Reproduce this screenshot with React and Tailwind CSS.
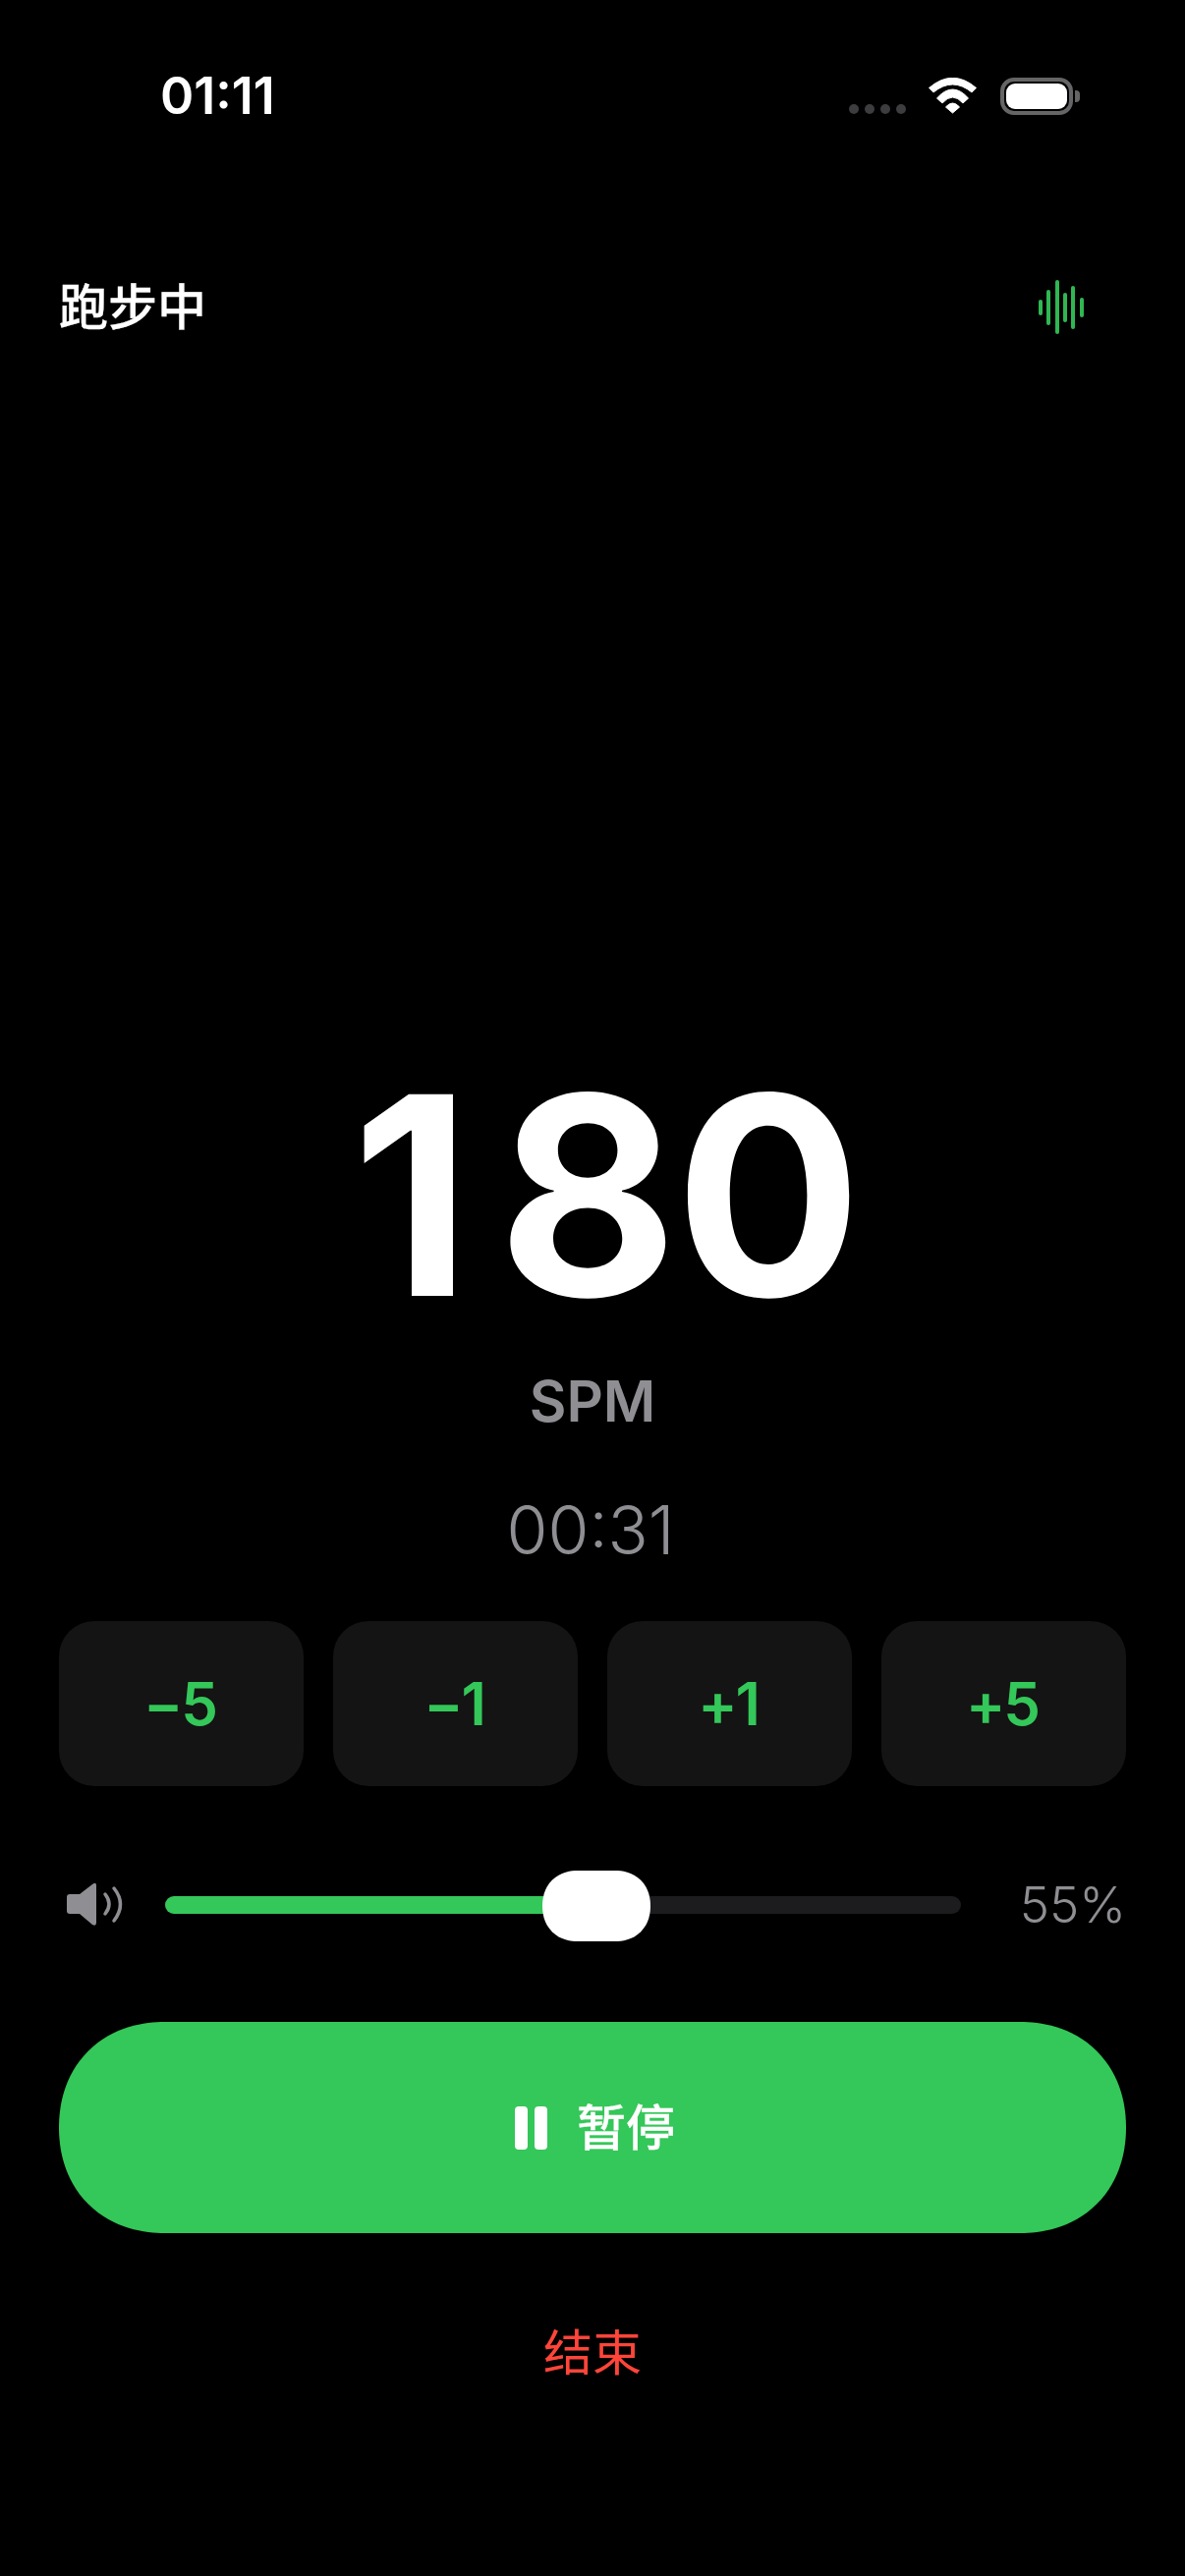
const steps = ["−5", "−1", "+1", "+5"];

function StatusIcons() {
  return (
    <div className="flex items-center">
      <div className="flex gap-[6px] mt-[26px]">
        <span className="w-[10px] h-[10px] rounded-full bg-[#3d3d3f]" />
        <span className="w-[10px] h-[10px] rounded-full bg-[#3d3d3f]" />
        <span className="w-[10px] h-[10px] rounded-full bg-[#3d3d3f]" />
        <span className="w-[10px] h-[10px] rounded-full bg-[#3d3d3f]" />
      </div>
      <svg className="ml-[22px]" width="52" height="38" viewBox="0 0 52 38">
        <g fill="#fff" stroke="#fff" strokeWidth="1" strokeLinejoin="round">
          <path d="M1.5 10.5 Q25.5 -10 49.5 10.5 L45 15 Q25.5 -1 6 15 Z" />
          <path d="M9.5 21 Q25.5 3 41.5 21 L36 26 Q25.5 14 15 26 Z" />
          <path d="M18.5 30 Q25.5 22 32.5 30 L25.5 36 Z" />
        </g>
      </svg>
      <div className="ml-[22px] w-[74px] h-[38px] rounded-[14px] border-[4px] border-[#656567] p-[2px]">
        <div className="w-full h-full rounded-[9px] bg-white" />
      </div>
      <div className="ml-[2px] w-[5px] h-[12px] rounded-r-[4px] bg-[#656567]" />
    </div>
  );
}

function Waveform() {
  const bars = [
    [3, 37, 49],
    [11, 27, 59],
    [20, 17, 68],
    [28, 30, 56],
    [36, 23, 63],
    [45, 35, 51],
  ];
  return (
    <svg width="48" height="86" viewBox="0 0 48 86" className="text-[#34c759]">
      {bars.map(([x, y1, y2]) => (
        <line key={x} x1={x} x2={x} y1={y1} y2={y2} stroke="currentColor" strokeWidth="4" strokeLinecap="round" opacity="0.92" />
      ))}
    </svg>
  );
}

function SpeakerIcon() {
  return (
    <svg width="66" height="48" viewBox="0 0 66 48" className="text-[#8e8e93] overflow-visible">
      <path d="M38 4 Q38 0 34 3 L21 13 H11 Q8 13 8 16 V30 Q8 33 11 33 H21 L34 44 Q38 46 38 42 Z" fill="currentColor" />
      <path d="M47 13 Q55 23 47 33" fill="none" stroke="currentColor" strokeWidth="3.5" strokeLinecap="round" />
      <path d="M56 7 Q69 23 56 40" fill="none" stroke="currentColor" strokeWidth="3.5" strokeLinecap="round" />
    </svg>
  );
}

export default function App() {
  return (
    <div className="w-[1206px] h-[2622px] bg-black flex flex-col font-['Inter','Noto_Sans_CJK_SC',sans-serif] overflow-hidden">
      {/* status bar */}
      <div className="mt-[68px] h-[60px] flex items-center justify-between pl-[163px] pr-[107px]">
        <span className="text-[52px] leading-[60px] font-semibold text-white">01:11</span>
        <StatusIcons />
      </div>

      {/* header */}
      <div className="mt-[155px] h-[60px] px-[60px] flex items-center justify-between">
        <span className="text-[50px] leading-[60px] font-medium text-white [-webkit-text-stroke:0.3px_white]">跑步中</span>
        <div className="mr-[42px]">
          <Waveform />
        </div>
      </div>

      <div className="flex-1" />

      {/* cadence readout */}
      <div className="flex flex-col items-center">
        <div className="h-[288px] pl-[26px] text-[282px] leading-[288px] font-bold text-white tracking-[-3px]">
          <span className="mr-[30px]">1</span>80
        </div>
        <div className="mt-[29px] h-[72px] text-[58px] leading-[72px] font-semibold text-[#8e8e93]">SPM</div>
        <div className="mt-[55px] mr-[4px] h-[80px] text-[68px] leading-[80px] font-[350] text-[#8e8e93]">00:31</div>
      </div>

      {/* cadence steppers */}
      <div className="mt-[53px] px-[60px] grid grid-cols-4 gap-[30px]">
        {steps.map((s) => (
          <button key={s} className="h-[168px] pr-[3px] rounded-[36px] bg-[#141414] text-[60px] font-semibold tracking-[-2px] text-[#34c759]">
            {s}
          </button>
        ))}
      </div>

      {/* volume */}
      <div className="mt-[85px] px-[60px] h-[72px] flex items-center gap-[48px]">
        <div className="w-[60px] shrink-0">
          <SpeakerIcon />
        </div>
        <div className="relative flex-1 h-[18px] rounded-full bg-[#1c1c1e]">
          <div className="h-full w-[445px] rounded-l-full bg-[#34c759]" />
          <div className="absolute left-[384px] top-[-26px] w-[110px] h-[72px] rounded-[36px] bg-white [corner-shape:superellipse(1.12)]" />
        </div>
        <div className="w-[120px] shrink-0 text-right text-[51px] leading-[60px] font-[350] text-[#8e8e93]">55%</div>
      </div>

      {/* pause */}
      <div className="mt-[83px] px-[60px]">
        <button className="w-full h-[215px] rounded-[108px] [corner-shape:superellipse(1.1)] bg-[#34c759] flex items-center justify-center gap-[30px]">
          <span className="flex gap-[7px] ml-[5px]">
            <span className="w-[13px] h-[44px] rounded-[4px] bg-white" />
            <span className="w-[13px] h-[44px] rounded-[4px] bg-white" />
          </span>
          <span className="text-[50px] leading-[60px] font-medium text-white [-webkit-text-stroke:0.3px_white]">暂停</span>
        </button>
      </div>

      {/* end run */}
      <div className="mt-[92px] mb-[197px] h-[60px] text-center text-[50px] leading-[60px] font-normal text-[#ff453a]">结束</div>
    </div>
  );
}
